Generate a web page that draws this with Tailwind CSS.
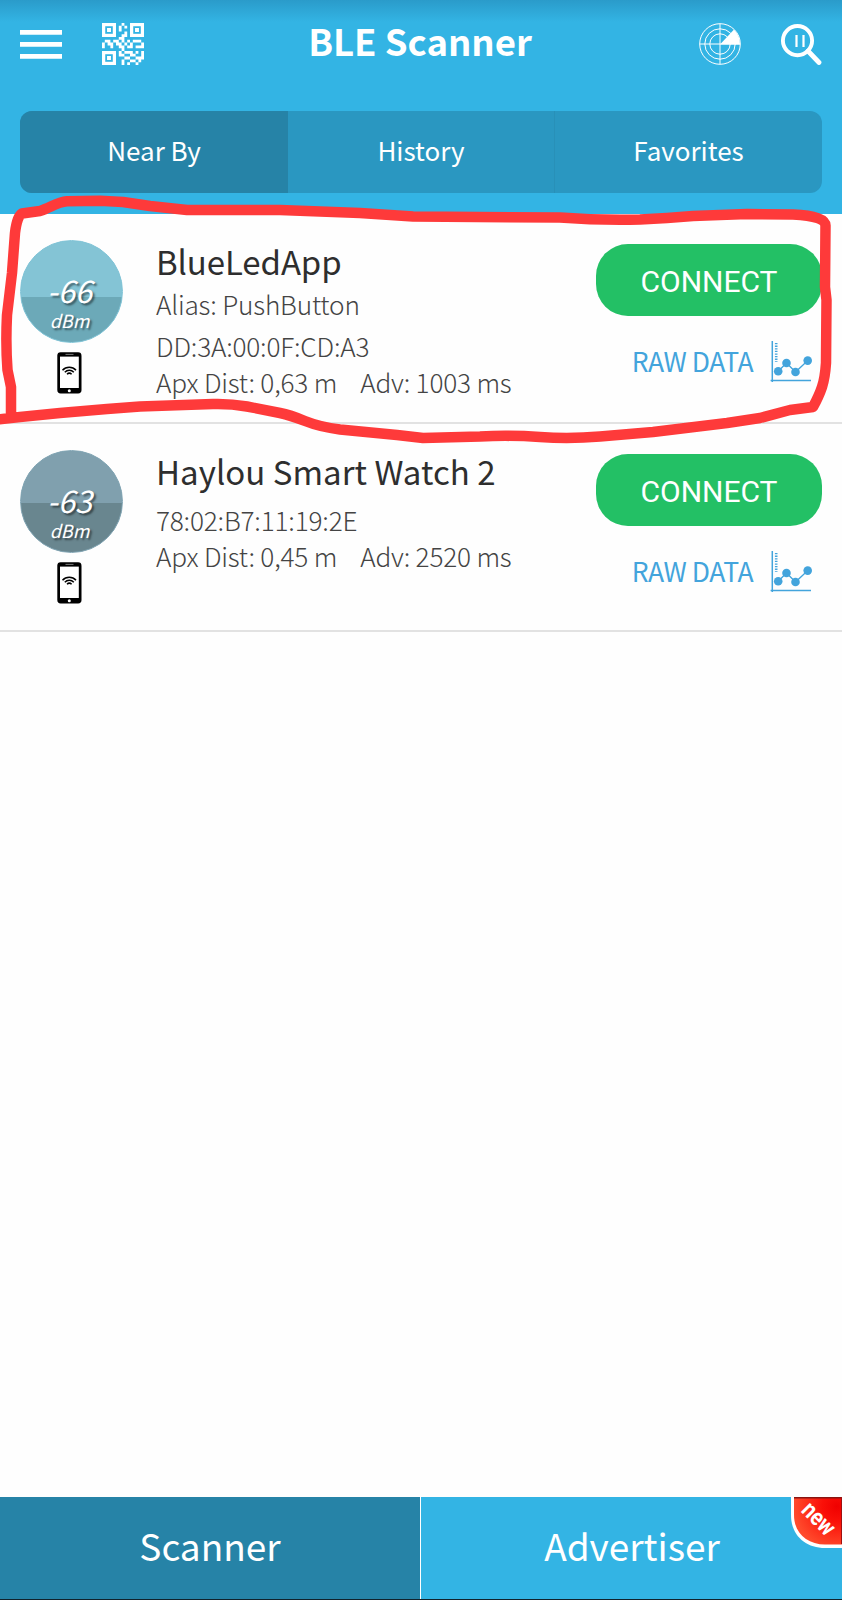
<!DOCTYPE html>
<html lang="en">
<head>
<meta charset="utf-8">
<title>BLE Scanner</title>
<script src="https://cdn.jsdelivr.net/npm/@tailwindcss/browser@4"></script>
</head>
<body class="relative flex h-[1600px] w-[842px] flex-col overflow-hidden bg-[#fefefe] font-['Noto_Sans_CJK_SC',sans-serif]">
<svg class="hidden">
  <symbol id="phone" viewBox="0 0 25 42">
    <rect x="0.3" y="0.3" width="24.2" height="41.2" rx="3.4" fill="#000"/>
    <rect x="3" y="4.6" width="18.8" height="31.4" fill="#fff"/>
    <path d="M8.500 2.400h8" stroke="#777" stroke-width="1"/>
    <circle cx="12.300" cy="38.800" r="1.500" fill="#fff"/>
    <g fill="none" stroke="#000" stroke-width="1.500"><path d="M5.500 18.300c3.600-4 9.900-4 13.500 0M7.800 20.200c2.500-2.600 6.500-2.600 9 0M10 22.200c1.300-1.200 3.300-1.200 4.600 0"/></g>
  </symbol>
  <symbol id="chart" viewBox="0 0 42 42">
    <g fill="none" stroke="#43a4dc"><path d="M2.300 0v41M0.600 39.500h40.400" stroke-width="1.500"/><path d="M6.200 2v19" stroke-width="2.600" stroke-dasharray="1.300 1.300"/><path d="M8.200 30.200 16.500 22 25.500 31 37.800 19.600" stroke-width="1.300"/></g>
    <g fill="#43a4dc"><circle cx="8.200" cy="30.200" r="4.300"/><circle cx="16.500" cy="22" r="4.300"/><circle cx="25.500" cy="31" r="4.300"/><circle cx="37.700" cy="19.600" r="4.300"/></g>
  </symbol>
</svg>

<header class="flex h-[214px] shrink-0 flex-col bg-[#33b4e4] bg-[linear-gradient(#2a9bca,#33b4e4_22px)] text-white">
  <div class="flex h-[111px] items-start justify-between px-5 pt-[23px]">
    <div class="flex w-[180px] gap-10">
      <svg class="size-[42px]" viewBox="0 0 42 42"><path d="M0 9.300h42M0 21.300h42M0 33.300h42" stroke="#fff" stroke-width="4.800"/></svg>
      <svg class="size-[42px]" viewBox="0 0 15 15" fill="#fff">
        <g fill="none" stroke="#fff" stroke-width="1.150"><rect x=".58" y=".58" width="3.850" height="3.850"/><rect x="10.580" y=".58" width="3.850" height="3.850"/><rect x=".58" y="10.580" width="3.850" height="3.850"/></g>
        <path d="M1.800 1.800h1.400v1.400h-1.400zM11.800 1.800h1.400v1.400h-1.400zM1.800 11.800h1.400v1.400h-1.400z"/>
        <path d="M7 0h1v1h-1zM6 1h1v2h-1zM8 1h1v1h-1zM8 3h1v2h-1zM7 4h1v1h-1zM6 5h2v1h-2zM1 6h2v1h-2zM4 6h2v1h-2zM7 6h1v1h-1zM9 6h1v1h-1zM11 6h3v1h-3zM0 7h1v2h-1zM2 7h2v1h-2zM5 7h2v1h-2zM8 7h1v1h-1zM10 7h1v1h-1zM14 7h1v2h-1zM3 8h1v1h-1zM6 8h2v1h-2zM9 8h2v1h-2zM12 8h2v1h-2zM7 9h1v1h-1zM6 10h1v2h-1zM8 10h3v1h-3zM12 10h1v1h-1zM14 10h1v3h-1zM7 11h1v1h-1zM10 11h2v1h-2zM8 12h2v1h-2zM12 12h2v1h-2zM7 13h1v2h-1zM10 13h2v1h-2zM13 13h1v1h-1zM9 14h1v1h-1zM12 14h1v1h-1z"/>
      </svg>
    </div>
    <h1 class="mt-[-9px] pr-[2px] text-[36.5px] leading-[54px] font-bold whitespace-nowrap">BLE Scanner</h1>
    <div class="flex w-[180px] justify-end gap-[39px]">
      <svg class="size-[42px]" viewBox="0 0 42 42"><g fill="none" stroke="#fff"><circle cx="21" cy="21" r="20.300"/><circle cx="21" cy="21" r="15.200"/><circle cx="21" cy="21" r="10.200"/><path d="M21 1v40M1 21h40"/></g><path d="M21 21.500 35 6.500Q41 13 41 21.500z" fill="#fff"/></svg>
      <svg class="size-[42px]" viewBox="0 0 42 42" fill="none" stroke="#fff"><circle cx="17.500" cy="17.600" r="14.600" stroke-width="3.900"/><path d="M28 28 39 39.500" stroke-width="4.800" stroke-linecap="round"/><path d="M16.500 12v12M23.500 12v12" stroke-width="2.200"/></svg>
    </div>
  </div>
  <nav class="mx-5 flex h-[82px] overflow-hidden rounded-[12px] bg-[#2a97c1] text-[26px] leading-[77px]">
    <div class="w-[268px] bg-[#2683a7] text-center">Near By</div>
    <div class="w-[267px] border-r border-[#2890b8] text-center">History</div>
    <div class="w-[267px] text-center">Favorites</div>
  </nav>
</header>

<main class="flex grow flex-col text-[#2e2e2e]">
  <section class="flex h-[210px] border-b-2 border-[#e2e2e2] pr-5 pl-5">
    <div class="flex w-[136px] flex-col items-start pt-[26px]">
      <div class="flex size-[103px] flex-col items-center rounded-full border border-[#7fc3d6] bg-[linear-gradient(#84c4d5_56px,#6ca9b8_56px)] pr-[4px] text-white italic [text-shadow:2px_2px_2px_rgba(0,0,0,0.5)]">
        <span class="mt-[35px] text-[31px] leading-[28px]">-66</span>
        <span class="mt-[7px] text-[18px] leading-[18px]">dBm</span>
      </div>
      <svg class="mt-[9px] ml-[37px] h-[42px] w-[25px]"><use href="#phone"/></svg>
    </div>
    <div class="flex grow flex-col pt-[25px] text-[26.2px] leading-9 font-light tracking-[-0.2px] whitespace-pre text-[#444]">
      <h2 class="text-[33px] leading-[44px] font-normal tracking-[-0.1px] text-[#2e2e2e]">BlueLedApp</h2>
      <p class="mt-[3px]">Alias: PushButton</p>
      <p class="mt-[6px]">DD:3A:00:0F:CD:A3</p>
      <p class="flex gap-[23px]"><span>Apx Dist: 0,63 m</span><span>Adv: 1003 ms</span></p>
    </div>
    <div class="flex w-[226px] flex-col pt-[30px]">
      <button class="h-[72px] w-[226px] rounded-[32px] bg-[#23c065] pt-[2px] font-[Roboto] text-[30px] leading-[72px] text-white">CONNECT</button>
      <div class="mt-[25px] flex justify-end pr-[10px]">
        <span class="text-[26.500px] leading-[40px] tracking-[-0.500px] whitespace-nowrap text-[#43a4dc]">RAW DATA</span>
        <svg class="ml-[17px] size-[42px]"><use href="#chart"/></svg>
      </div>
    </div>
  </section>
  <section class="flex h-[208px] border-b-2 border-[#e2e2e2] pr-5 pl-5">
    <div class="flex w-[136px] flex-col items-start pt-[26px]">
      <div class="flex size-[103px] flex-col items-center rounded-full border border-[#7fa3b2] bg-[linear-gradient(#80a0ae_52px,#69868f_52px)] pr-[4px] text-white italic [text-shadow:2px_2px_2px_rgba(0,0,0,0.5)]">
        <span class="mt-[35px] text-[31px] leading-[28px]">-63</span>
        <span class="mt-[7px] text-[18px] leading-[18px]">dBm</span>
      </div>
      <svg class="mt-[9px] ml-[37px] h-[42px] w-[25px]"><use href="#phone"/></svg>
    </div>
    <div class="flex grow flex-col pt-[25px] text-[26.2px] leading-9 font-light tracking-[-0.2px] whitespace-pre text-[#444]">
      <h2 class="text-[33px] leading-[44px] font-normal tracking-[0.03px] text-[#2e2e2e]">Haylou Smart Watch 2</h2>
      <p class="mt-[9px]">78:02:B7:11:19:2E</p>
      <p class="flex gap-[23px]"><span>Apx Dist: 0,45 m</span><span>Adv: 2520 ms</span></p>
    </div>
    <div class="flex w-[226px] flex-col pt-[30px]">
      <button class="h-[72px] w-[226px] rounded-[32px] bg-[#23c065] pt-[2px] font-[Roboto] text-[30px] leading-[72px] text-white">CONNECT</button>
      <div class="mt-[25px] flex justify-end pr-[10px]">
        <span class="text-[26.500px] leading-[40px] tracking-[-0.500px] whitespace-nowrap text-[#43a4dc]">RAW DATA</span>
        <svg class="ml-[17px] size-[42px]"><use href="#chart"/></svg>
      </div>
    </div>
  </section>
</main>

<footer class="relative flex h-[103px] shrink-0 border-b border-[#10222c] bg-[#33b4e4] text-[37px] leading-[96px] text-white">
  <div class="w-[421px] border-r border-white bg-[#2683a7] text-center">Scanner</div>
  <div class="w-[421px] pl-px text-center">Advertiser</div>
  <svg class="absolute top-0 right-0 h-[52px] w-[51px]" viewBox="0 0 51 52">
    <defs><radialGradient id="r" cx="0.900" cy="0.200" r="0.900"><stop offset="0" stop-color="#f00000"/><stop offset=".35" stop-color="#fa1008"/><stop offset="1" stop-color="#ff4a2c"/></radialGradient></defs>
    <path d="M0 0H51V51H34C14 51 0 38 0 18z" fill="#fff"/>
    <path d="M3 0H51V47.500H34C16 47.500 3 36 3 18z" fill="url(#r)"/>
    <path d="M3 .7H51" stroke="#8a1410" stroke-width="1.500"/><path d="M50.500 0V47" stroke="#a01010"/>
    <text transform="translate(26.500 23) rotate(45)" y="6" text-anchor="middle" font-family="Roboto" font-weight="700" font-size="24" textLength="37" lengthAdjust="spacingAndGlyphs" fill="#fff">new</text>
  </svg>
</footer>

<!-- Freehand marker around the first device -->
<svg class="pointer-events-none absolute top-0 left-0 h-[460px] w-[842px]" viewBox="0 0 842 460" fill="none" stroke="#fe3a3a" stroke-width="10.500" stroke-linejoin="round">
  <path d="M11 416V387L7.500 370C6 350 6 335 7 315L12 273 15 233Q17 216 22 213.500L40 211C50 208 57 202 67 201.300L100 200.700 123 202 150 206 187 210H280L360 213 413 216.500 560 217.500Q600 220.500 640 219.500L667 218 693 216 747 214 793 214.500Q826 216 825.500 226L825 287 826.500 300 826 363Q825 378 822 387T813 407L790 410 760 418 727 423 653 432 600 436.500Q570 439 540 437T480 436.500L423 438 397 435 340 429.500Q320 427 305 421T280 413L247 406.500Q230 403.500 213 404L140 406.500 107 409 60 413 20 417 -6 420"/>
</svg>
</body>
</html>
